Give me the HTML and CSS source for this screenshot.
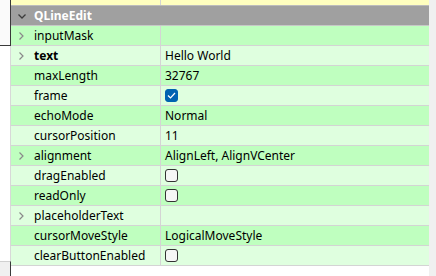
FILE: index.html
```html
<!DOCTYPE html>
<html lang="en">
<head>
  <meta charset="UTF-8" />
  <title>Property Editor</title>
  <link rel="stylesheet" href="styles.css">
</head>
<body>
  <!-- edge of the neighbouring widget -->
  <div class="edge">
    <div class="edge-top"></div>
    <div class="edge-mid"></div>
    <div class="edge-bottom"></div>
  </div>

  <div class="editor">
    <div class="row row-partial">
      <div class="name"></div>
      <div class="value"></div>
    </div>

    <div class="group">
      <svg class="caret-down" width="8" height="5" viewBox="0 0 8 5"><polyline points="0.5,0.5 4,4 7.5,0.5" /></svg>
      <span>QLineEdit</span>
    </div>

    <div class="row dark">
      <div class="name"><svg class="caret" width="5" height="8" viewBox="0 0 5 8"><polyline points="0.5,0.5 4,4 0.5,7.5" /></svg>inputMask</div>
      <div class="value"></div>
    </div>
    <div class="row light">
      <div class="name changed"><svg class="caret" width="5" height="8" viewBox="0 0 5 8"><polyline points="0.5,0.5 4,4 0.5,7.5" /></svg>text</div>
      <div class="value">Hello World</div>
    </div>
    <div class="row dark">
      <div class="name">maxLength</div>
      <div class="value">32767</div>
    </div>
    <div class="row light">
      <div class="name">frame</div>
      <div class="value"><span class="check on"><svg width="9" height="7" viewBox="0 0 9 7"><polyline points="1,3.5 3.5,6 8,1" /></svg></span></div>
    </div>
    <div class="row dark">
      <div class="name">echoMode</div>
      <div class="value">Normal</div>
    </div>
    <div class="row light">
      <div class="name">cursorPosition</div>
      <div class="value">11</div>
    </div>
    <div class="row dark">
      <div class="name"><svg class="caret" width="5" height="8" viewBox="0 0 5 8"><polyline points="0.5,0.5 4,4 0.5,7.5" /></svg>alignment</div>
      <div class="value">AlignLeft, AlignVCenter</div>
    </div>
    <div class="row light">
      <div class="name">dragEnabled</div>
      <div class="value"><span class="check"></span></div>
    </div>
    <div class="row dark">
      <div class="name">readOnly</div>
      <div class="value"><span class="check"></span></div>
    </div>
    <div class="row light">
      <div class="name"><svg class="caret" width="5" height="8" viewBox="0 0 5 8"><polyline points="0.5,0.5 4,4 0.5,7.5" /></svg>placeholderText</div>
      <div class="value"></div>
    </div>
    <div class="row dark">
      <div class="name">cursorMoveStyle</div>
      <div class="value">LogicalMoveStyle</div>
    </div>
    <div class="row light">
      <div class="name">clearButtonEnabled</div>
      <div class="value"><span class="check"></span></div>
    </div>
  </div>

  <div class="scroll"></div>
</body>
</html>
```

FILE: styles.css
```css
:root {
  --grid: #d4d4d4;
  --green-dark: #bfffbf;
  --green-light: #dfffdf;
  --yellow: #ffffbf;
  --group: #a0a0a0;
}

html, body {
  margin: 0;
  padding: 0;
}

body {
  font-family: 'Noto Sans', 'Open Sans', sans-serif;
  font-size: 12px;
  color: #000;
  background: #fff;
  width: 436px;
  height: 276px;
  display: flex;
  overflow: hidden;
}

/* left edge */
.edge {
  width: 11px;
  display: flex;
  flex-direction: column;
}

.edge-top {
  height: 46px;
  border-right: 1px solid #3a3a3a;
  border-bottom: 1px solid #3a3a3a;
  box-sizing: border-box;
  background: #fafafa;
}

.edge-mid {
  flex: 1;
  border-right: 1px solid #d8d8d8;
}

.edge-bottom {
  height: 14px;
  background: #f0f0f0;
  border-top: 1px solid #d0d0d0;
  border-right: 1px solid #3a3a3a;
}

/* property table */
.editor {
  flex: 1;
  display: flex;
  flex-direction: column;
  background: #fff;
}

.row {
  display: grid;
  grid-template-columns: 150px 1fr;
  height: 20px;
  line-height: 19px;
  border-bottom: 1px solid var(--grid);
  box-sizing: border-box;
}

.row.dark { background: var(--green-dark); }
.row.light { background: var(--green-light); }

.row-partial {
  height: 6px;
  background: var(--yellow);
  border-bottom-color: #bcbcbc;
}

.name {
  border-right: 1px solid var(--grid);
  padding-left: 23px;
  position: relative;
  white-space: nowrap;
}

.name.changed { font-weight: 700; }

.value {
  padding-left: 4px;
  white-space: nowrap;
  display: flex;
  align-items: center;
}

.caret {
  position: absolute;
  left: 8px;
  top: 6px;
  fill: none;
  stroke: #8a8a8a;
  stroke-width: 1.2;
}

.group {
  height: 20px;
  line-height: 19px;
  background: var(--group);
  color: #fff;
  font-weight: 700;
  padding-left: 23px;
  position: relative;
  border-bottom: 1px solid #c8c8c8;
  box-sizing: border-box;
}

.caret-down {
  position: absolute;
  left: 7px;
  top: 8px;
  fill: none;
  stroke: #3c3c3c;
  stroke-width: 1.3;
}

/* checkboxes */
.check {
  width: 11px;
  height: 11px;
  border: 1px solid #333;
  border-radius: 3px;
  background: #f6f6f6;
  display: flex;
  align-items: center;
  justify-content: center;
}

.check.on {
  background: #0063b1;
  border-color: #0063b1;
}

.check svg {
  fill: none;
  stroke: #fff;
  stroke-width: 1.2;
}

.scroll {
  width: 7px;
  background: #f0f0f0;
}
```
